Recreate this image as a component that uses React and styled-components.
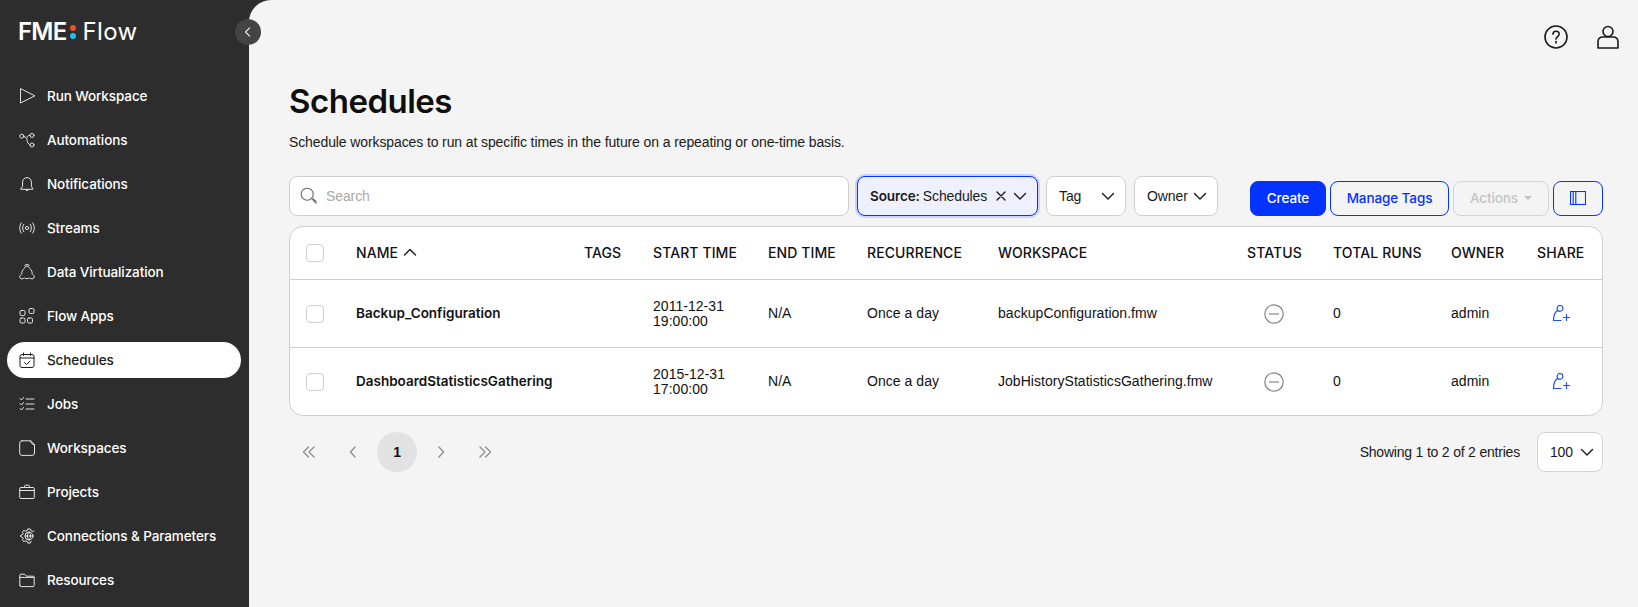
import React from "react";
import styled, { createGlobalStyle } from "styled-components";

const FONT = `"Liberation Sans", Arial, sans-serif`;
const MEDIUM = `Inter, "Liberation Sans", Arial, sans-serif`;
const BLUE = "#0433ff";

const GlobalStyle = createGlobalStyle`
  html, body {
    margin: 0;
    height: 100%;
    overflow: hidden;
    background: #2d2d2d;
    font-family: ${FONT};
    color: #111;
  }
  #root { height: 100%; }
  * { box-sizing: border-box; }
`;

const Layout = styled.div`
  display: flex;
  height: 100vh;
  background: #2d2d2d;
`;

const Sidebar = styled.aside`
  position: relative;
  flex: 0 0 249px;
  height: 100%;
`;

const LogoRow = styled.div`
  display: flex;
  align-items: center;
  height: 74px;
  padding: 0 0 10px 18px;
  color: #fff;
`;

const LogoText = styled.span`
  font-family: ${MEDIUM};
  font-size: 24px;
  line-height: 1;
  font-weight: ${(p) => p.$weight};
  letter-spacing: ${(p) => p.$spacing}px;
`;

const LogoDots = styled.span`
  display: flex;
  flex-direction: column;
  gap: 2.5px;
  margin: 0 6px 0 4px;
`;

const Dot = styled.i`
  display: block;
  width: 6px;
  height: 6px;
  border-radius: 50%;
  background: ${(p) => p.$color};
`;

const CollapseButton = styled.button`
  position: absolute;
  top: 19px;
  left: 235px;
  width: 26px;
  height: 26px;
  padding: 0;
  display: flex;
  align-items: center;
  justify-content: center;
  border: 0;
  border-radius: 50%;
  background: #444;
  color: #ddd;
  z-index: 2;
`;

const Nav = styled.nav`
  display: flex;
  flex-direction: column;
`;

const NavRow = styled.div`
  display: flex;
  align-items: center;
  height: 44px;
  padding: 0 8px 0 7px;
`;

const NavPill = styled.div`
  display: flex;
  align-items: center;
  gap: 12px;
  width: 100%;
  height: 36px;
  padding-left: 12px;
  border-radius: 18px;
  font-family: ${MEDIUM};
  font-size: 13.5px;
  font-weight: 500;
  letter-spacing: -0.1px;
  background: ${(p) => (p.$active ? "#fff" : "transparent")};
  color: ${(p) => (p.$active ? "#1c1c1c" : "#fff")};
`;

const NavIcon = styled.svg`
  flex: 0 0 16px;
  width: 16px;
  height: 16px;
  fill: none;
  stroke: currentColor;
  stroke-width: 1;
  stroke-linecap: round;
  stroke-linejoin: round;
  color: ${(p) => (p.$active ? "#1c1c1c" : "#e4e4e4")};
`;

const Main = styled.main`
  position: relative;
  flex: 1;
  min-width: 0;
  height: 100%;
  padding: 0 35px 0 40px;
  background: #f4f4f4;
  border-top-left-radius: 22px;
  letter-spacing: -0.11px;
`;

const TopBar = styled.div`
  display: flex;
  align-items: center;
  justify-content: flex-end;
  gap: 28px;
  height: 74px;
  margin-right: -17px;
`;

const TopIcon = styled.svg`
  width: 24px;
  height: 24px;
  fill: none;
  stroke: #1a1a1a;
  stroke-width: 1.6;
`;

const Title = styled.h1`
  margin: 5px 0 0;
  font-family: ${MEDIUM};
  font-size: 33px;
  line-height: 44px;
  font-weight: 600;
  letter-spacing: -0.5px;
  color: #0f0f0f;
`;

const Subtitle = styled.p`
  margin: 9px 0 0;
  font-size: 14px;
  line-height: 20px;
  color: #1a1a1a;
`;

const Toolbar = styled.div`
  display: flex;
  align-items: flex-end;
  gap: 32px;
  height: 40px;
  margin-top: 24px;
`;

const Filters = styled.div`
  display: flex;
  flex: 1;
  gap: 8px;
  min-width: 0;
`;

const SearchBox = styled.div`
  display: flex;
  flex: 1;
  align-items: center;
  gap: 8px;
  height: 40px;
  padding: 0 10px;
  background: #fff;
  border: 1px solid #cfcfcf;
  border-radius: 8px;
  font-size: 14px;
  color: #a9a9a9;
`;

const FilterSelect = styled.div`
  display: flex;
  align-items: center;
  justify-content: space-between;
  flex: 0 0 ${(p) => p.$width}px;
  height: 40px;
  padding: 0 10px 0 12px;
  border-radius: 8px;
  font-size: 14px;
  color: #1a1a1a;
  background: ${(p) => (p.$active ? "#eef1fd" : "#fff")};
  border: 1px solid ${(p) => (p.$active ? BLUE : "#cfcfcf")};
  box-shadow: ${(p) => (p.$active ? "0 0 0 2px #c9d3fb" : "none")};
`;

const FilterLabel = styled.span`
  display: flex;
  gap: 3px;
  white-space: nowrap;
  b {
    font-family: ${MEDIUM};
    font-size: 13.5px;
    font-weight: 600;
    letter-spacing: -0.1px;
  }
`;

const FilterEnd = styled.span`
  display: flex;
  align-items: center;
  gap: 5px;
`;

const Chevron = styled.svg`
  display: block;
  width: 14px;
  height: 14px;
  fill: none;
  stroke: ${(p) => p.$color || "#1a1a1a"};
  stroke-width: 1.4;
  stroke-linecap: round;
  stroke-linejoin: round;
`;

const Actions = styled.div`
  display: flex;
  gap: 4px;
`;

const Button = styled.button`
  display: flex;
  align-items: center;
  justify-content: center;
  gap: 6px;
  width: ${(p) => p.$width}px;
  height: 35px;
  padding: 0 0 1px;
  border-radius: 8px;
  font-family: ${MEDIUM};
  font-size: 13.5px;
  font-weight: 500;
  letter-spacing: -0.1px;
  background: ${(p) => (p.$primary ? BLUE : "transparent")};
  color: ${(p) => (p.$primary ? "#fff" : p.disabled ? "#c4c4c4" : BLUE)};
  border: 1px solid ${(p) => (p.disabled ? "#d4d4d4" : BLUE)};
`;

const Caret = styled.i`
  width: 0;
  height: 0;
  border-left: 4px solid transparent;
  border-right: 4px solid transparent;
  border-top: 4px solid #c4c4c4;
`;

const Table = styled.div`
  margin-top: 10px;
  background: #fff;
  border: 1px solid #cfcfcf;
  border-radius: 14px;
  overflow: hidden;
`;

const Row = styled.div`
  display: grid;
  grid-template-columns: 66px 228px 69px 115px 99px 131px 249px 86px 118px 86px 1fr;
  align-items: center;
  height: ${(p) => (p.$head ? 52 : 68)}px;
  font-size: 14px;
  line-height: 15px;
  letter-spacing: 0.04px;
  color: #111;
  border-top: ${(p) => (p.$head ? "none" : "1px solid #cfcfcf")};
`;

const HeadCell = styled.div`
  display: flex;
  align-items: center;
  gap: 5px;
  padding-bottom: 2px;
  font-family: ${MEDIUM};
  font-weight: 500;
  font-size: 14px;
  letter-spacing: 0.1px;
  white-space: nowrap;
`;

const Cell = styled.div`
  white-space: nowrap;
`;

const NameCell = styled(Cell)`
  font-family: ${MEDIUM};
  font-size: 13.5px;
  font-weight: 600;
  letter-spacing: 0;
`;

const Checkbox = styled.span`
  display: block;
  width: 18px;
  height: 18px;
  margin-left: 16px;
  background: #fff;
  border: 1px solid #cfcfcf;
  border-radius: 4px;
`;

const StatusIcon = styled.svg`
  display: block;
  width: 20px;
  height: 20px;
  margin-left: 17px;
  fill: none;
  stroke: #858585;
  stroke-width: 1.2;
`;

const ShareIcon = styled.svg`
  display: block;
  width: 18px;
  height: 18px;
  margin-left: 15px;
  fill: none;
  stroke: #2250f5;
  stroke-width: 1.2;
  stroke-linecap: round;
`;

const Footer = styled.div`
  display: flex;
  align-items: center;
  justify-content: space-between;
  height: 40px;
  margin-top: 16px;
`;

const Pager = styled.div`
  display: flex;
  gap: 4px;
`;

const PageButton = styled.div`
  display: flex;
  align-items: center;
  justify-content: center;
  width: 40px;
  height: 40px;
  border-radius: 50%;
  font-size: 14px;
  font-weight: 700;
  background: ${(p) => (p.$current ? "#e2e2e2" : "transparent")};
  color: #111;
`;

const PagerIcon = styled.svg`
  width: 16px;
  height: 16px;
  fill: none;
  stroke: #8f8f8f;
  stroke-width: 1.4;
  stroke-linecap: round;
  stroke-linejoin: round;
`;

const Entries = styled.div`
  display: flex;
  align-items: center;
  gap: 17px;
  font-size: 14px;
  letter-spacing: -0.2px;
  color: #1a1a1a;
`;

const PageSize = styled.div`
  display: flex;
  align-items: center;
  justify-content: space-between;
  width: 66px;
  height: 40px;
  padding: 0 8px 0 12px;
  background: #fff;
  border: 1px solid #d4d4d4;
  border-radius: 8px;
`;

const navIcons = {
  run: <path d="M1.5 1v14L15.5 8z" />,
  auto: (
    <>
      <circle cx="2.8" cy="4.2" r="2" />
      <circle cx="13" cy="3.4" r="2" />
      <circle cx="13" cy="13" r="2" />
      <path d="M4.8 4.4 7 5.6c.8.5 1 1 1 1.8 0 2.8 1.4 5 3 5.6M8 5.2c0-1 1-1.8 3-1.8" />
    </>
  ),
  bell: (
    <>
      <path d="M2 12.5c1.2-.8 1.6-1.8 1.6-3.5V6a4.4 4.4 0 0 1 8.8 0v3c0 1.7.4 2.7 1.6 3.5.4.3.3.8-.2.8H2.2c-.5 0-.6-.5-.2-.8z" />
      <path d="M6.5 13.5c.2 1.6 2.8 1.6 3 0" />
    </>
  ),
  stream: (
    <>
      <circle cx="8" cy="8" r="1.6" />
      <path d="M4.8 4.2c-1.6 2-1.6 5.6 0 7.6M11.2 4.2c1.6 2 1.6 5.6 0 7.6M2.4 2.8C.1 5.6.1 10.4 2.4 13.2M13.6 2.8c2.3 2.8 2.3 7.6 0 10.4" />
    </>
  ),
  data: (
    <>
      <path d="M5.6 3.6a2.6 2.6 0 0 1 4.8 0M5.8 1.2c1.3-.9 3.1-.9 4.4 0" />
      <path d="M5.2 4.6C3.4 5.8 2.6 7.8 2.8 10M10.8 4.6c1.8 1.2 2.6 3.2 2.4 5.4M5.8 14.2c1.4.6 3 .6 4.4 0" />
      <path d="M2 10.6C.6 11.4.3 13 1.1 14c.9 1.2 2.8 1.2 3.8.3M14 10.6c1.4.8 1.7 2.4.9 3.4-.9 1.2-2.8 1.2-3.8.3" />
    </>
  ),
  apps: (
    <>
      <rect x="1" y="2.5" width="5" height="5" rx="1.3" />
      <rect x="10" y="0.5" width="5" height="5" rx="1.3" />
      <rect x="1" y="10" width="5" height="5" rx="1.3" />
      <rect x="8.5" y="10" width="5" height="5" rx="1.3" />
    </>
  ),
  schedule: (
    <>
      <rect x="1" y="2.5" width="14" height="13" rx="2" />
      <path d="M1 6h14M4.5 1v2.5M11.5 1v2.5M5.5 10.5l2 2 3.5-3.5" />
    </>
  ),
  jobs: (
    <>
      <path d="M1 2.5 2.5 4 4.5 1.5M1 7.5 2.5 9l2-2.5M1 12.5 2.5 14l2-2.5M7 3h8M7 8h8M7 13h8" />
    </>
  ),
  file: <path d="M3 .8h8.6L15.5 4.7V13a2.4 2.4 0 0 1-2.4 2.4H3A2.4 2.4 0 0 1 .7 13V3A2.3 2.3 0 0 1 3 .8zM11.6.8c0 2.2 1.4 3.9 3.9 3.9" />,
  project: (
    <>
      <rect x="0.7" y="3.5" width="14.6" height="11" rx="1.2" />
      <path d="M5.5 3.5V2.2c0-.6.4-1 1-1h3c.6 0 1 .4 1 1v1.3M.7 6.5h14.6" />
    </>
  ),
  conn: (
    <>
      <circle cx="10" cy="8" r="4" />
      <path d="M6 8h8M10 4c-2.2 2.4-2.2 5.6 0 8M10 4c2.2 2.4 2.2 5.6 0 8" />
      <path d="M9 1h2.4l.6 1.6 1.6.8 1.2-.4M9 15h2.4l.6-1.6M9 1 8 2.8 6 3 4.6 2.4 3.4 4.4 4.4 5.8 1 8l3.4 2.2-1 1.4 1.2 2 1.4-.6 2 .2L9 15" />
    </>
  ),
  folder: <path d="M.8 13.6V3.2c0-.6.4-1 1-1h3.8l1.6 2h7c.6 0 1 .4 1 1v8.4c0 .6-.4 1-1 1H1.8c-.6 0-1-.4-1-1zM.8 5.4h14.4" />,
};

const navItems = [
  ["Run Workspace", "run"],
  ["Automations", "auto"],
  ["Notifications", "bell"],
  ["Streams", "stream"],
  ["Data Virtualization", "data"],
  ["Flow Apps", "apps"],
  ["Schedules", "schedule", true],
  ["Jobs", "jobs"],
  ["Workspaces", "file"],
  ["Projects", "project"],
  ["Connections & Parameters", "conn"],
  ["Resources", "folder"],
];

const columns = ["NAME", "TAGS", "START TIME", "END TIME", "RECURRENCE", "WORKSPACE", "STATUS", "TOTAL RUNS", "OWNER", "SHARE"];

const schedules = [
  { name: "Backup_Configuration", start: ["2011-12-31", "19:00:00"], workspace: "backupConfiguration.fmw" },
  { name: "DashboardStatisticsGathering", start: ["2015-12-31", "17:00:00"], workspace: "JobHistoryStatisticsGathering.fmw" },
];

const Down = ({ color }) => (
  <Chevron viewBox="0 0 14 14" $color={color}>
    <path d="M1.5 4.5 7 10l5.5-5.5" />
  </Chevron>
);

const Pager1 = ({ d }) => (
  <PagerIcon viewBox="0 0 16 16">
    <path d={d} />
  </PagerIcon>
);

const App = () => {
  return (
    <Layout>
      <GlobalStyle />
      <Sidebar>
        <LogoRow>
          <LogoText $weight={600} $spacing={-0.8}>FME</LogoText>
          <LogoDots>
            <Dot $color="#f04e23" />
            <Dot $color="#19c3f3" />
          </LogoDots>
          <LogoText $weight={400} $spacing={0.4}>Flow</LogoText>
        </LogoRow>
        <CollapseButton aria-label="Collapse">
          <svg width="12" height="12" viewBox="0 0 12 12" fill="none" stroke="currentColor" strokeWidth="1.3" strokeLinecap="round" strokeLinejoin="round">
            <path d="M7.5 2 3.5 6l4 4" />
          </svg>
        </CollapseButton>
        <Nav>
          {navItems.map(([label, icon, active]) => (
            <NavRow key={label}>
              <NavPill $active={active}>
                <NavIcon viewBox="0 0 16 16" $active={active}>
                  {navIcons[icon]}
                </NavIcon>
                {label}
              </NavPill>
            </NavRow>
          ))}
        </Nav>
      </Sidebar>
      <Main>
        <TopBar>
          <TopIcon viewBox="0 0 24 24">
            <circle cx="12" cy="12" r="11" />
            <path d="M9 9.3c0-4 6.2-4 6.2-.2 0 2.4-3.2 2.6-3.2 5" strokeLinecap="round" />
            <path d="M12 16.6v1.4" strokeLinecap="round" />
          </TopIcon>
          <TopIcon viewBox="0 0 24 24">
            <circle cx="12" cy="6.5" r="5" />
            <path d="M2 23v-6c0-3 2-5 5-5h10c3 0 5 2 5 5v6z" strokeLinejoin="round" />
          </TopIcon>
        </TopBar>
        <Title>Schedules</Title>
        <Subtitle>Schedule workspaces to run at specific times in the future on a repeating or one-time basis.</Subtitle>
        <Toolbar>
          <Filters>
            <SearchBox>
              <svg width="18" height="18" viewBox="0 0 18 18" fill="none" stroke="#6e6e6e" strokeWidth="1.1">
                <circle cx="7.2" cy="7.2" r="6" />
                <path d="m11.6 11.6 5 5M12.8 11.4l3.6 3.6" />
              </svg>
              Search
            </SearchBox>
            <FilterSelect $active $width={181}>
              <FilterLabel>
                <b>Source:</b> Schedules
              </FilterLabel>
              <FilterEnd>
                <Chevron viewBox="0 0 14 14">
                  <path d="m3 3 8 8M11 3l-8 8" />
                </Chevron>
                <Down />
              </FilterEnd>
            </FilterSelect>
            <FilterSelect $width={80}>
              Tag
              <Down />
            </FilterSelect>
            <FilterSelect $width={84}>
              Owner
              <Down />
            </FilterSelect>
          </Filters>
          <Actions>
            <Button $primary $width={76}>Create</Button>
            <Button $width={119}>Manage Tags</Button>
            <Button disabled $width={96}>
              Actions
              <Caret />
            </Button>
            <Button $width={50} aria-label="Columns">
              <svg width="16" height="14" viewBox="0 0 16 14" fill="none" stroke={BLUE} strokeWidth="1.1">
                <rect x="0.5" y="0.5" width="15" height="13" />
                <path d="M3.2.5v13M5.8.5v13" />
              </svg>
            </Button>
          </Actions>
        </Toolbar>
        <Table>
          <Row $head>
            <Checkbox />
            {columns.map((col) => (
              <HeadCell key={col}>
                {col}
                {col === "NAME" && (
                  <Chevron viewBox="0 0 14 14">
                    <path d="M1.5 10 7 4.5l5.5 5.5" />
                  </Chevron>
                )}
              </HeadCell>
            ))}
          </Row>
          {schedules.map((item) => (
            <Row key={item.name}>
              <Checkbox />
              <NameCell>{item.name}</NameCell>
              <Cell />
              <Cell>
                {item.start[0]}
                <br />
                {item.start[1]}
              </Cell>
              <Cell>N/A</Cell>
              <Cell>Once a day</Cell>
              <Cell>{item.workspace}</Cell>
              <StatusIcon viewBox="0 0 20 20">
                <circle cx="10" cy="10" r="9.2" />
                <path d="M5 10h10" />
              </StatusIcon>
              <Cell>0</Cell>
              <Cell>admin</Cell>
              <ShareIcon viewBox="0 0 18 18">
                <circle cx="8" cy="3.4" r="2.9" />
                <path d="M5.6 5.5C3 7 1.5 10 1.5 15.5h7.5M11.5 12.5h6M14.5 9.5v6" />
              </ShareIcon>
            </Row>
          ))}
        </Table>
        <Footer>
          <Pager>
            <PageButton><Pager1 d="M7.5 3 2.5 8l5 5M13 3 8 8l5 5" /></PageButton>
            <PageButton><Pager1 d="M10 3 5.5 8l4.5 5" /></PageButton>
            <PageButton $current>1</PageButton>
            <PageButton><Pager1 d="M6 3l4.5 5L6 13" /></PageButton>
            <PageButton><Pager1 d="M3 3l5 5-5 5M8.5 3l5 5-5 5" /></PageButton>
          </Pager>
          <Entries>
            Showing 1 to 2 of 2 entries
            <PageSize>
              100
              <Down />
            </PageSize>
          </Entries>
        </Footer>
      </Main>
    </Layout>
  );
};

export default App;
